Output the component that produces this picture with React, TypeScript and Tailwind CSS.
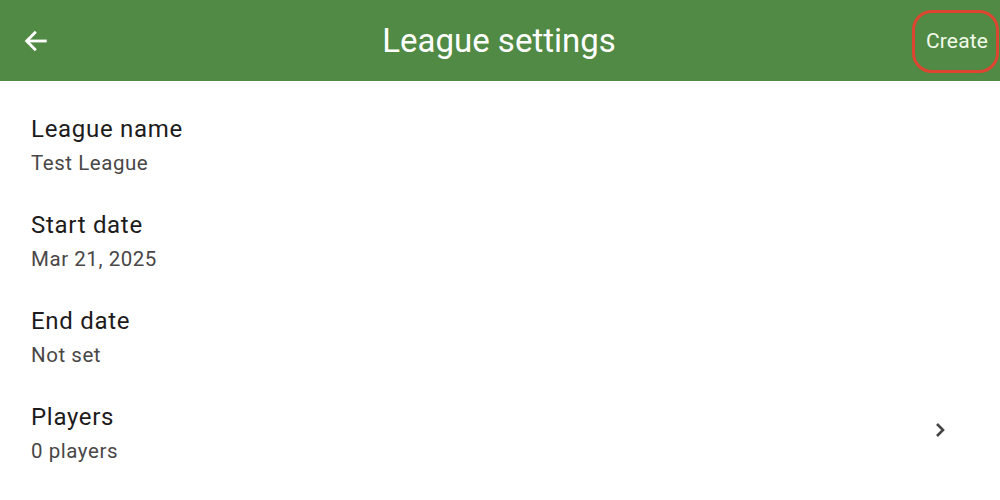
import React from "react";

const rows = [
  { title: "League name", sub: "Test League", chevron: false },
  { title: "Start date", sub: "Mar 21, 2025", chevron: false },
  { title: "End date", sub: "Not set", chevron: false },
  { title: "Players", sub: "0 players", chevron: true },
];

export default function App() {
  return (
    <div className="w-[1000px] h-[500px] bg-white overflow-hidden" style={{ fontFamily: "Roboto, 'Noto Sans', sans-serif" }}>
      <header className="h-[81px] bg-[#518a45] flex items-center">
        <div className="w-[72px] flex items-center justify-center">
          <svg width="28" height="28" viewBox="0 0 24 24" fill="none" stroke="white" strokeWidth="2.4" strokeLinecap="square">
            <path d="M20 12H5" />
            <path d="M11 5l-7 7 7 7" strokeLinejoin="miter" />
          </svg>
        </div>
        <div className="flex-1 text-center text-white text-[33px] pl-[14px]">League settings</div>
        <div className="w-[87px] h-[63px] mt-[2px] mr-[1px] pl-[3px] border-[3px] border-[#dc4530] rounded-[20px] flex items-center justify-center text-[#f1fbe9] text-[21px] tracking-[0.15px]">
          Create
        </div>
      </header>
      <div className="pt-[16px]">
        {rows.map((r) => (
          <div key={r.title} className="h-[96px] flex items-center pl-[31px] pr-[48px]">
            <div className="flex-1 flex flex-col">
              <div className="text-[24px] leading-[32px] text-[#1d1b1b] tracking-[0.7px]">{r.title}</div>
              <div className="text-[20.5px] leading-[28px] mt-[4px] text-[#4a4747] tracking-[0.55px]">{r.sub}</div>
            </div>
            {r.chevron && (
              <svg className="mb-[6px]" width="24" height="24" viewBox="0 0 24 24" fill="none" stroke="#444" strokeWidth="2.6">
                <path d="M9 6l6 6-6 6" />
              </svg>
            )}
          </div>
        ))}
      </div>
    </div>
  );
}
